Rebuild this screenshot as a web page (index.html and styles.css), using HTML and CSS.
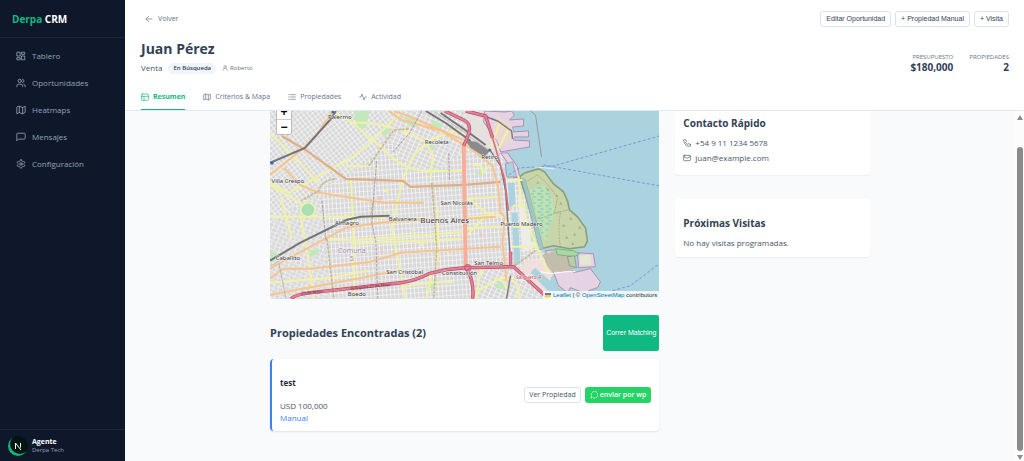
FILE: index.html
```html
<!DOCTYPE html>
<html lang="es">
<head>
<meta charset="utf-8">
<meta name="viewport" content="width=device-width, initial-scale=1">
<title>Derpa CRM</title>
<link rel="stylesheet" href="styles.css">
</head>
<body>
<div class="app">
  <aside class="sidebar">
    <div class="brand"><span class="brand-accent">Derpa</span> CRM</div>
    <nav class="nav">
      <a class="nav-link" href="#"><svg class="icon" viewBox="0 0 24 24"><rect x="3" y="3" width="7" height="9"/><rect x="14" y="3" width="7" height="5"/><rect x="14" y="12" width="7" height="9"/><rect x="3" y="16" width="7" height="5"/></svg>Tablero</a>
      <a class="nav-link" href="#"><svg class="icon" viewBox="0 0 24 24"><path d="M16 21v-2a4 4 0 0 0-4-4H6a4 4 0 0 0-4 4v2"/><circle cx="9" cy="7" r="4"/><path d="M22 21v-2a4 4 0 0 0-3-3.9M16 3.1a4 4 0 0 1 0 7.8"/></svg>Oportunidades</a>
      <a class="nav-link" href="#"><svg class="icon" viewBox="0 0 24 24"><path d="M2 6v15l6-3 8 3 6-3V3l-6 3-8-3zM8 3v15M16 6v15"/></svg>Heatmaps</a>
      <a class="nav-link" href="#"><svg class="icon" viewBox="0 0 24 24"><path d="M22 15a2 2 0 0 1-2 2H6l-4 4V5a2 2 0 0 1 2-2h16a2 2 0 0 1 2 2z"/></svg>Mensajes</a>
      <a class="nav-link" href="#"><svg class="icon" viewBox="0 0 24 24"><path d="M12.2 2h-.4a2 2 0 0 0-2 2v.2a2 2 0 0 1-1 1.7l-.4.3a2 2 0 0 1-2 0l-.2-.1a2 2 0 0 0-2.7.7l-.2.4a2 2 0 0 0 .7 2.7l.2.1a2 2 0 0 1 1 1.7v.5a2 2 0 0 1-1 1.8l-.2.1a2 2 0 0 0-.7 2.7l.2.4a2 2 0 0 0 2.7.7l.2-.1a2 2 0 0 1 2 0l.4.3a2 2 0 0 1 1 1.7v.2a2 2 0 0 0 2 2h.4a2 2 0 0 0 2-2v-.2a2 2 0 0 1 1-1.7l.4-.3a2 2 0 0 1 2 0l.2.1a2 2 0 0 0 2.7-.7l.2-.4a2 2 0 0 0-.7-2.7l-.2-.1a2 2 0 0 1-1-1.8v-.5a2 2 0 0 1 1-1.7l.2-.1a2 2 0 0 0 .7-2.7l-.2-.4a2 2 0 0 0-2.7-.7l-.2.1a2 2 0 0 1-2 0l-.4-.3a2 2 0 0 1-1-1.7V4a2 2 0 0 0-2-2z"/><circle cx="12" cy="12" r="3"/></svg>Configuración</a>
    </nav>
    <div class="user">
      <span class="avatar"><svg class="avatar-mark" viewBox="0 0 10 10"><path d="M2.5 8V2l5.500 7M7.500 2v4.500"/></svg></span>
      <div><div class="user-name">Agente</div><div class="user-org">Derpa Tech</div></div>
    </div>
  </aside>

  <div class="main">
    <header class="header">
      <div class="toolbar">
        <button class="back" type="button"><svg class="icon-sm" viewBox="0 0 24 24"><path d="M21 12H3M11 4l-8 8 8 8"/></svg>Volver</button>
        <div class="actions">
          <button class="btn" type="button">Editar Oportunidad</button>
          <button class="btn" type="button">+ Propiedad Manual</button>
          <button class="btn" type="button">+ Visita</button>
        </div>
      </div>
      <div class="summary">
        <div>
          <h1 class="client">Juan Pérez</h1>
          <div class="meta"><span class="kind">Venta</span><span class="pill">En Búsqueda</span><span class="owner"><svg class="icon-xs" viewBox="0 0 24 24"><path d="M20 22v-3a5 5 0 0 0-5-5H9a5 5 0 0 0-5 5v3"/><circle cx="12" cy="7" r="5"/></svg>Roberto</span></div>
        </div>
        <div class="stats">
          <div><div class="stat-label">PRESUPUESTO</div><div class="stat-value">$180,000</div></div>
          <div><div class="stat-label">PROPIEDADES</div><div class="stat-value">2</div></div>
        </div>
      </div>
      <nav class="tabs">
        <a class="tab tab-active" href="#"><svg class="icon-sm" viewBox="0 0 24 24"><rect x="2" y="3" width="20" height="19" rx="2"/><path d="M2 10h20M9 10v12"/></svg>Resumen</a>
        <a class="tab" href="#"><svg class="icon-sm" viewBox="0 0 24 24"><path d="M2 6v15l6-3 8 3 6-3V3l-6 3-8-3zM8 3v15M16 6v15"/></svg>Criterios &amp; Mapa</a>
        <a class="tab" href="#"><svg class="icon-sm" viewBox="0 0 24 24"><path d="M8 5h14M8 12h14M8 19h14M2 5h2M2 12h2M2 19h2"/></svg>Propiedades</a>
        <a class="tab" href="#"><svg class="icon-sm" viewBox="0 0 24 24"><path d="M22 12h-4l-3 9L9 3l-3 9H2"/></svg>Actividad</a>
      </nav>
    </header>

    <div class="body">
      <main class="scroller">
        <div class="columns">
          <div class="primary">
            <div class="map">
              <svg class="map-canvas" viewBox="269 110 390 188" preserveAspectRatio="xMidYMid slice" role="img" aria-label="Mapa de Buenos Aires">
                <defs>
                  <pattern id="grid" width="4" height="5" patternUnits="userSpaceOnUse" patternTransform="rotate(-4)"><rect width="4" height="5" fill="#d9d8d8"/><path d="M0 0H4M0 0V5" stroke="#fff" stroke-width="1.200"/></pattern>
                  <pattern id="diag" width="4" height="4" patternUnits="userSpaceOnUse" patternTransform="rotate(-38)"><rect width="4" height="4" fill="#d9d8d8"/><path d="M0 0H4M0 0V4" stroke="#fff" stroke-width="1.200"/></pattern>
                  <pattern id="tilt" width="5" height="4" patternUnits="userSpaceOnUse" patternTransform="rotate(24)"><rect width="5" height="4" fill="#d9d8d8"/><path d="M0 0H5M0 0V4" stroke="#fff" stroke-width="1.200"/></pattern>
                  <pattern id="marsh" width="8" height="6" patternUnits="userSpaceOnUse"><path d="M1 1h4M4 4h3" stroke="#6bb9d8" stroke-width=".9"/></pattern>
                </defs>
                <rect x="269" y="110" width="390" height="188" fill="#aad3df"/>
                <path d="M269 110H485L505 150 504 170 507 178 521 176 542 250 552 272 548 285 546 298H269z" fill="url(#grid)"/>
                <path d="M269 110H398L372 155 342 178 318 188 269 222z" fill="url(#diag)"/>
                <path d="M269 222L320 192 322 210 329 298H269z" fill="url(#tilt)" opacity=".7"/>
                <path d="M475 298L482 270 508 268 540 298zM398 110H466V148L430 172 400 160 385 128z" fill="url(#tilt)"/>
                <path d="M466 110H484L500 145 494 158 470 136z" fill="#e6e1e1"/>
                <g stroke="#ad86ae" stroke-width=".9" fill="#e5d3e3">
                  <path d="M484 110L505 111 511 110 514 114 509 119 523 118V125L512 126 513 131 528 130V136L514 136 512 139 529 140V146L500 151 497 141 483 121z"/>
                  <path d="M500 152L507 152 517 166 519 176 513 177 508 163z"/>
                  <path d="M545 250L557 249 573 272 590 268 600 281 597 287 588 290 591 298 580 291 570 287 567 292 558 285z"/>
                  <path d="M577 252L593 253 595 266 578 267z"/>
                </g>
                <path d="M496 113L508 122Q515 129 512 141L500 146 492 132z" fill="#ead9d2"/>
                <path d="M519 176L524 172 538 168 544 171 553 183 563 191 567 200 569 209 577 216 585 227 587 240 584 246 569 248 553 245 540 248 525 195z" fill="#c8d5ab" stroke="#8aa070" stroke-width="1.600"/>
                <path d="M529 188L545 185 552 198 555 214 548 226 546 242 541 236z" fill="#bde3b0"/>
                <path d="M529 188L545 185 552 198 555 214 548 226 546 242 541 236z" fill="url(#marsh)"/>
                <path d="M527 180L537 174 546 182 557 197 554 212 569 209M538 218L560 211Q557 230 560 246" stroke="#ac9b6b" stroke-width=".7" stroke-dasharray="2 1" fill="none"/>
                <g fill="#9bb583"><path d="M536 183l1-3 2 3zM546 190l1-3 2 3zM555 196l1-3 2 3zM559 204l1-3 2 3zM569 219l1-3 2 3zM573 235l1-3 2 3zM565 238l1-3 2 3zM562 226l1-3 2 3zM578 228l1-3 2 3zM571 244l1-3 2 3z"/></g>
                <path d="M542 254L555 250 570 256 577 267 566 271 549 271z" fill="#c3beab"/>
                <path d="M555 248L573 250 579 253 574 256 557 254z" fill="#a9d99c" stroke="#6ea979" stroke-width=".8"/>
                <path d="M579 255L590 254 591 264 580 264z" fill="#e3e8cf"/>
                <path d="M567 256L574 255 576 267 569 265z" fill="#b6cfa7" stroke="#8c7d86" stroke-width=".7"/>
                <path d="M521 177L525 179 543 248 539 249z" fill="#9cc8cd" stroke="#94b39b" stroke-width=".7"/>
                <path d="M505 163L512 161 516 176 506 176z" fill="#aad3df" stroke="#ad86ae" stroke-width=".7"/>
                <path d="M507 182H514L515 206H509zM511 212H517L520 262 514 264z" fill="#aad3df"/>
                <path d="M517 192L528 222 535 246 522 252z" fill="#eeeceb"/>
                <path d="M527 259L541 259 553 273 548 281 558 298H550L520 268z" fill="#f0dfdd"/>
                <path d="M534 267L558 287 570 298H555L530 272z" fill="#aad3df"/>
                <g fill="#c4e8bd">
                  <path d="M353 110H369L365 127 356 128zM383 126l7 3-4 6-6-3zM428 143l7 2-3 5-7-2zM429 282l9-3-4 8-9 1zM310 249l8-1-1 6-9 2zM478 170l6-2-2 6-7-1zM434 163l3 3-6 3z"/>
                  <path d="M269 250l7 3-3 9-4-2zM498 280l7 2-2 7-8-2zM396 196l4 1-1 3-4-1zM402 116l13 2 2 8-9-1zM432 119l10 4-2 5-9-3zM530 230l4 3 2 10-6-3z"/>
                </g>
                <g fill="#f5edb8"><path d="M404 130l4 3-2 3-4-3zM375 166l4 1-2 3-3-1zM384 188l4 1-1 3-4-1zM420 241l4 1-1 4-4-1zM344 212l3 1-1 3-3-1zM480 266l5 2-3 3-4-1zM371 259l3 1-2 3-3-1zM360 196l3 1-1 2-3-1zM385 208l3 1-1 2-3-1zM336 274l3 1-1 2-3-1zM447 252l3 1-1 2-3-1zM412 228l3 1-1 2-3-1z"/></g>
                <g fill="#f0c9c3"><path d="M378 195l3 1-1 4-3-1zM380 249l3 1-1 3-3-1zM479 232l3 1v3l-4-1zM431 194l4 1-1 3-4-1z"/></g>

                <g fill="none" stroke="#f1f1a8" stroke-width="2">
                  <path d="M269 132L283 146 318 182M352 122L388 153Q403 169 426 170L464 170M352 122L330 110M269 182L288 192 352 156 374 137 401 110M464 133L452 130 429 139 413 154 402 178 391 226 405 298M401 128L425 141 432 154 430 178M269 184L305 206M269 216H345L385 217M345 165H368M350 178L352 219 354 298M280 197L291 238M300 217L307 257 313 298M327 239H357L428 234 464 231M354 243L460 238"/>
                  <path d="M269 282L330 277 368 270M352 122Q370 121 393 127M431 272L426 298M400 287Q424 281 452 281M437 206V262M466 198L500 196M466 197L486 212 492 213M466 235L480 220 488 214M466 217L500 214M466 227L500 226M480 270L475 298M478 290L500 277 508 290M500 277Q520 276 518 298M518 175L520 195 527 222 538 250 548 273M507 179H522M512 205H525M512 226H530M512 246H538M489 150L499 122 508 128 497 149M472 164H480L482 172 488 166"/>
                </g>
                <circle cx="307" cy="209" r="7" fill="#a8e0b6" stroke="#f1f1a8" stroke-width="1.500"/>
                <path d="M281 135L306 150 345 178 402 180 410 186 464 184 500 181" fill="none" stroke="#e0ae80" stroke-width="2.200"/>
                <path d="M269 174L299 150 315 135 332 110M283 167L299 184 318 192 384 202 423 202M269 268L285 259 345 227 380 222 427 218M269 278L282 268 310 268 370 261 400 252 500 246M269 294L340 281 397 270M388 110L401 119 441 130 463 144M393 110L410 116 462 139M462 142L477 153 492 165 498 188 500 212 504 216 502 242 506 280M466 218L495 216" fill="none" stroke="#f8c48d" stroke-width="2"/>
                <g fill="none" stroke="#c7b98a" stroke-width="1.600" stroke-dasharray="3 1"><path d="M334 178Q320 180 318 190L300 200M408 128L393 129 368 165M431 182L433 207 436 248 433 298M326 238L333 298M514 265L535 250M372 202L370 216"/></g>
                <g fill="none" stroke="#ab92b3" stroke-width=".9" stroke-dasharray="3 1"><path d="M421 110L409 132 392 151M376 160L374 181 371 222 375 241 377 298M321 200L325 239M448 152L449 180"/></g>
                <path d="M269 162L304 147 330 118 335 110M269 260L299 242 346 219 360 216 389 215M425 110L445 122 470 140M440 112L466 130 485 144" fill="none" stroke="#747474" stroke-width="2"/>
                <path d="M470 110L497 120 511 130 512 138M490 150L500 165 505 190 507 218 509 247 510 262M510 275L506 298" fill="none" stroke="#777" stroke-width="1.400"/>
                <path d="M278 263L285 298M433 110L466 133M469 136L487 148M279 260L270 265" fill="none" stroke="#aaa" stroke-width=".700"/>
                <path d="M464 139L476 141 489 150 484 156 470 147z" fill="#8c8b8b"/>
                <path d="M463 143L465 265" fill="none" stroke="#f9ad97" stroke-width="4"/>
                <g fill="none" stroke="#b94b67" stroke-width="3.400"><path id="motorway" d="M290 298Q294 294 310 292L400 282Q415 280 428 273L445 269 465 267 508 266 513 266 525 277 548 298M444 110L463 119Q471 123 468 133L463 145M465 110L485 115 492 137M465 266Q474 280 472 298M510 251L510 264"/></g>
                <use href="#motorway" class="motorway-fill"/>
                <path d="M492 137L504 178 508 210" fill="none" stroke="#d86e83" stroke-width="1.600"/>
                <circle cx="467" cy="267" r="3" fill="none" stroke="#cf6580" stroke-width="1.500"/>
                <path d="M530 110L535 114 541 156" fill="none" stroke="#999" stroke-width="1"/>
                <path d="M508 174L519 167 553 165 659 135M543 164L659 185M612 290L630 285 659 263" fill="none" stroke="#6f91df" stroke-width=".9" stroke-dasharray="3 2"/>
                <path d="M540 271L551 273 565 271 575 271" stroke="#fff" stroke-width="1" fill="none"/>
                <path d="M535 166L554 168" stroke="#eee"/>
                <g fill="#4168c6"><circle cx="271" cy="162" r="1.800"/><circle cx="332" cy="111" r="1.500"/><circle cx="489" cy="149" r="1.500"/></g>
                <g class="place">
                  <text x="339" y="118">Palermo</text><text x="436" y="143">Recoleta</text><text x="489" y="158">Retiro</text><text x="287" y="182">Villa Crespo</text><text x="456" y="204">San Nicolás</text><text x="346" y="224">Almagro</text><text x="402" y="220">Balvanera</text><text x="521" y="225">Puerto Madero</text><text x="287" y="259">Caballito</text><text x="404" y="273">San Cristóbal</text><text x="459" y="274">Constitución</text><text x="488" y="264">San Telmo</text><text x="356" y="295">Boedo</text>
                </g>
                <text class="place-city" x="444" y="222">Buenos Aires</text>
                <text class="place-area" x="351" y="252">Comuna</text><text class="place-area" x="351" y="260">5</text>
                <text class="place-road" x="528" y="278">Salguero 4</text>
                <text class="road-name" x="311" y="293" transform="rotate(-6 311 293)">25 de Mayo</text><text class="road-name" x="370" y="287" transform="rotate(-6 370 287)">Autopista 25 de Mayo</text>
              </svg>
              <div class="zoom"><button class="zoom-btn" type="button" aria-label="Acercar">+</button><button class="zoom-btn" type="button" aria-label="Alejar">−</button></div>
              <div class="credit"><svg class="flag" viewBox="0 0 6 4"><path fill="#4c7be1" d="M0 0h6v2H0z"/><path fill="#ffd500" d="M0 2h6v2H0z"/></svg> <a href="#">Leaflet</a> | © <a href="#">OpenStreetMap</a> contributors</div>
            </div>
            <div class="section-head">
              <h2 class="section-title">Propiedades Encontradas (2)</h2>
              <button class="match" type="button">Correr Matching</button>
            </div>
            <article class="property">
              <div>
                <h3 class="property-name">test</h3>
                <div class="property-price">USD 100,000</div>
                <div class="property-source">Manual</div>
              </div>
              <div class="property-actions">
                <button class="btn btn-view" type="button">Ver Propiedad</button>
                <button class="btn-send" type="button"><svg class="icon-sm" viewBox="0 0 24 24"><path d="M3 21l2-5a10 10 0 1 1 4 4z" stroke-dasharray="5 4"/></svg>enviar por wp</button>
              </div>
            </article>
          </div>
          <div class="secondary">
            <section class="card card-contact">
              <h2 class="card-title">Contacto Rápido</h2>
              <p class="contact"><svg class="icon-sm" viewBox="0 0 24 24"><path d="M22 17v3a2 2 0 0 1-2.200 2A19.800 19.800 0 0 1 2 4.200 2 2 0 0 1 4 2h3a2 2 0 0 1 2 1.700l1 3.600-2 2.600a16 16 0 0 0 6 6l2.600-2 3.600 1a2 2 0 0 1 1.800 2z"/></svg>+54 9 11 1234 5678</p>
              <p class="contact"><svg class="icon-sm" viewBox="0 0 24 24"><rect x="2" y="4" width="20" height="16" rx="2"/><path d="M2 7l10 6 10-6"/></svg>juan@example.com</p>
            </section>
            <section class="card card-visits">
              <h2 class="card-title">Próximas Visitas</h2>
              <p class="empty">No hay visitas programadas.</p>
            </section>
          </div>
        </div>
      </main>
      <div class="scrollbar" aria-hidden="true"><span class="arrow-up"></span><span class="thumb"></span><span class="arrow-down"></span></div>
    </div>
  </div>
</div>
</body>
</html>
```
FILE: styles.css
```css
* { box-sizing: border-box; }
body { margin: 0; font: 8px/12px "Open Sans", "Noto Sans", sans-serif; color: #475569; background: #f8fafc; }
h1, h2, h3, p { margin: 0; }
a { color: inherit; text-decoration: none; }
button { margin: 0; padding: 0; border: 0; background: none; color: inherit; font: inherit; white-space: nowrap; }
svg { flex: none; }
.icon, .icon-sm, .icon-xs { fill: none; stroke: currentColor; stroke-width: 2; stroke-linecap: round; stroke-linejoin: round; }
.icon { width: 10px; height: 10px; }
.icon-sm { width: 8px; height: 8px; }
.icon-xs { width: 6px; height: 6px; }

.app { display: flex; height: 100vh; }
.sidebar { display: flex; flex-direction: column; flex: none; width: 125px; background: #0f172a; color: #94a3b8; }
.brand { padding: 12px 12px 11px; border-bottom: 1px solid #1c2639; color: #fff; font-size: 10px; line-height: 14px; font-weight: 700; }
.brand-accent { color: #10b981; }
.nav { display: flex; flex-direction: column; gap: 3px; padding: 6px 8px; }
.nav-link { display: flex; align-items: center; gap: 6px; height: 24px; padding: 0 8px; }
.user { display: flex; align-items: center; gap: 4px; margin-top: auto; padding: 6px 8px 5px; border-top: 1px solid #1c2639; font-size: 6px; line-height: 8px; }
.user-name { color: #fff; font-size: 7px; font-weight: 700; }
.avatar { display: flex; align-items: center; justify-content: center; width: 20px; height: 20px; border-radius: 50%; background: #03150f; box-shadow: inset 2px -2px 0 #10b981; }
.avatar-mark { width: 10px; height: 10px; fill: none; stroke: #fff; stroke-width: 1; }

.main { display: flex; flex-direction: column; flex: 1; min-width: 0; }
.header { flex: none; padding: 11px 15px 0 16px; background: #fff; border-bottom: 1px solid #e2e8f0; }
.toolbar, .summary, .section-head { display: flex; align-items: center; justify-content: space-between; }
.back { display: flex; align-items: center; gap: 5px; padding: 0 4px; color: #64748b; font-size: 7px; }
.actions { display: flex; gap: 4px; }
.btn { height: 16px; padding: 0 5px; border: 1px solid #dbe2ec; border-radius: 3px; background: #fff; color: #334155; font: 7px/14px "Liberation Sans", Arial, sans-serif; }
.summary { align-items: flex-end; margin-top: 12px; }
.client { color: #334155; font-size: 14px; line-height: 20px; font-weight: 700; }
.meta { display: flex; align-items: center; gap: 6px; margin-top: 3px; }
.kind { color: #475569; }
.pill { padding: 0 5px; border-radius: 6px; background: #f1f5f9; color: #334155; font-size: 6px; line-height: 11px; font-weight: 600; }
.owner { display: flex; align-items: center; gap: 2px; color: #64748b; font-size: 6px; }
.stats { display: flex; gap: 16px; text-align: right; }
.stat-label { color: #64748b; font-size: 6px; line-height: 8px; }
.stat-value { color: #334155; font-size: 10px; line-height: 13px; font-weight: 700; }
.tabs { display: flex; gap: 18px; margin-top: 11px; }
.tab { display: flex; align-items: center; gap: 4px; height: 25px; border-bottom: 1px solid transparent; color: #64748b; font-size: 7px; }
.tab-active { border-color: #10b981; color: #10b981; font-weight: 700; }

.body { display: flex; flex: 1; min-height: 0; }
.scroller { flex: 1; min-width: 0; overflow: hidden; }
.columns { display: grid; grid-template-columns: minmax(0, 2fr) minmax(0, 1fr); gap: 16px; width: 100%; max-width: 600px; margin: 0 auto; }
.map { position: relative; overflow: hidden; border-radius: 0 0 4px 4px; }
.map-canvas { display: block; width: 100%; }
.motorway-fill { stroke: #e38296; stroke-width: 2; fill: none; }
#motorway { stroke-width: inherit; }
.place, .place-city, .place-area, .place-road, .road-name { font-family: "Noto Sans", sans-serif; font-size: 6px; text-anchor: middle; fill: #333; paint-order: stroke; stroke: #ffffffb0; stroke-width: 1px; }
.place-city { font-size: 8px; }
.place-area { fill: #a284a6; font-size: 7px; }
.place-road { fill: #c8454d; font-size: 5px; }
.road-name { fill: #682b3a; font-size: 4px; stroke: none; }
.zoom { position: absolute; top: -8px; left: 6px; display: flex; flex-direction: column; border: 1px solid #bbb; border-radius: 2px; background: #fff; }
.zoom-btn { width: 14px; height: 15px; color: #000; font: 700 12px/14px "Liberation Sans", Arial, sans-serif; }
.zoom-btn + .zoom-btn { border-top: 1px solid #ccc; }
.credit { position: absolute; right: 0; bottom: 0; padding: 0 2px; background: #ffffffcc; color: #333; font: 6px/8px "Liberation Sans", Arial, sans-serif; white-space: nowrap; }
.credit a { color: #0078a8; }
.flag { width: 6px; height: 4px; }
.section-head { margin-top: 16px; }
.section-title { color: #334155; font-size: 11px; line-height: 16px; font-weight: 700; }
.match { height: 36px; padding: 0 3px; border-radius: 2px; background: #10b981; color: #fff; font: 7px/10px "Liberation Sans", Arial, sans-serif; }
.property { display: flex; align-items: center; justify-content: space-between; margin-top: 8px; padding: 18px 8px 7px; border-left: 2px solid #3b82f6; border-radius: 4px; background: #fff; box-shadow: 0 1px 2px #0f172a1a; }
.property-name { margin-bottom: 10px; color: #1e293b; font-size: 8px; line-height: 12px; }
.property-price { line-height: 13px; }
.property-source { color: #3b82f6; }
.property-actions { display: flex; align-items: center; gap: 4px; margin-bottom: 10px; }
.btn-view { padding: 0 4px; font: 7px/14px "Open Sans", "Noto Sans", sans-serif; color: #475569; }
.btn-send { display: flex; align-items: center; gap: 2px; height: 16px; padding: 0 5px; border-radius: 3px; background: #25d366; color: #fff; font-size: 7px; font-weight: 600; }
.card { padding: 0 8px; border-radius: 4px; background: #fff; box-shadow: 0 1px 1px #0f172a0d; }
.card-title { color: #334155; font-size: 10px; line-height: 14px; font-weight: 700; }
.card-contact { padding-top: 5px; padding-bottom: 10px; border-radius: 0 0 4px 4px; }
.card-contact .card-title { margin-bottom: 5px; }
.card-visits { margin-top: 24px; padding-top: 17px; padding-bottom: 8px; }
.card-visits .card-title { margin-bottom: 7px; }
.contact { display: flex; align-items: center; gap: 4px; line-height: 15px; }
.scrollbar { display: flex; flex-direction: column; align-items: center; flex: none; width: 9px; padding: 4px 1px 1px; background: #fcfcfc; }
.thumb { flex: 1; width: 6px; margin: 27px 0 4px; border-radius: 3px; background: #8b8b8b; }
.arrow-up, .arrow-down { border: 3px solid transparent; border-top: 0; border-bottom: 5px solid #8b8b8b; }
.arrow-down { transform: rotate(180deg); }
```
